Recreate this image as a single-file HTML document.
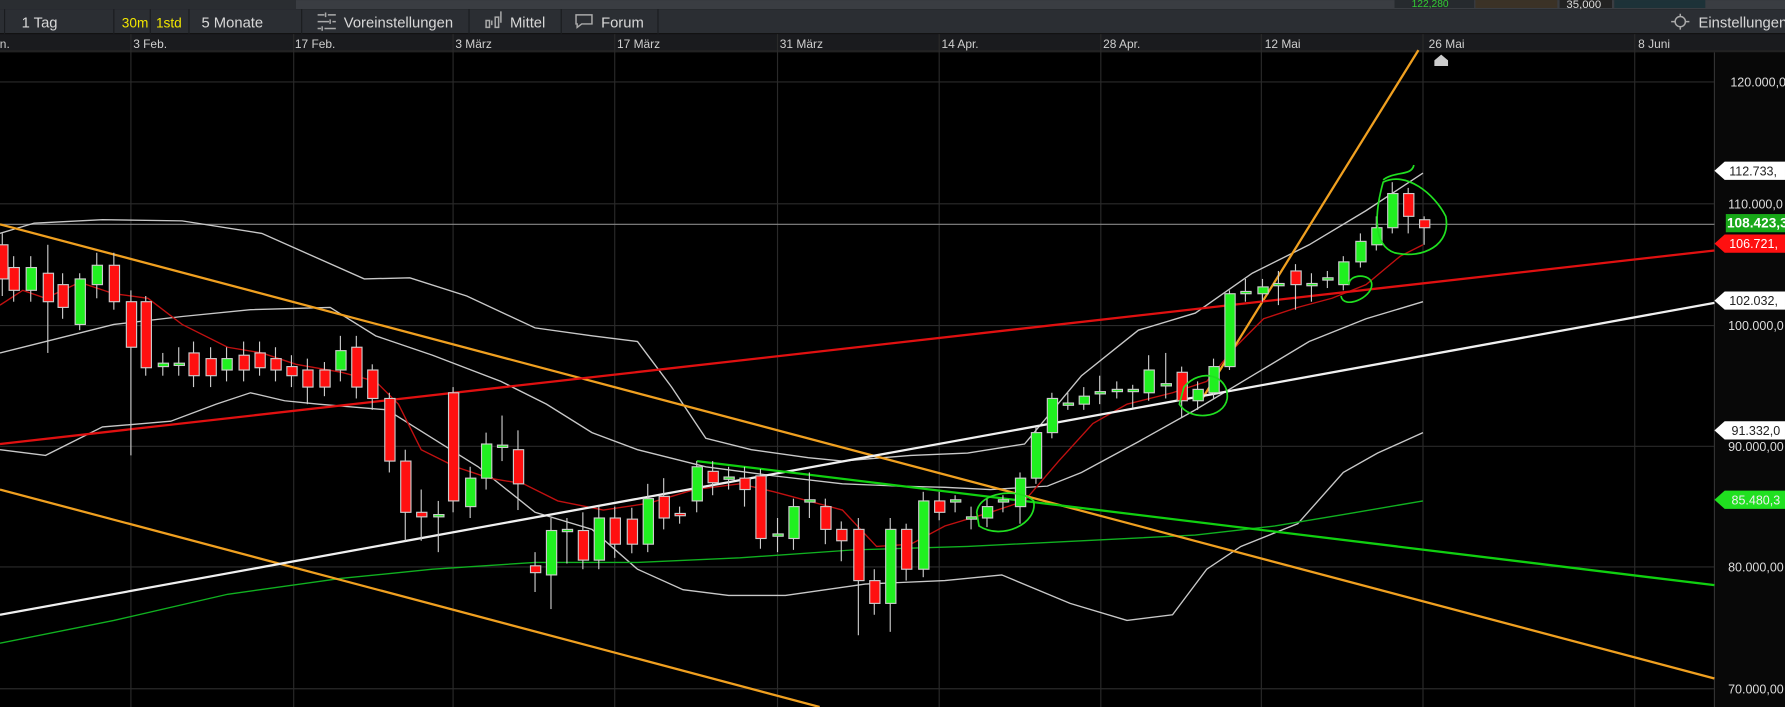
<!DOCTYPE html>
<html><head><meta charset="utf-8"><style>
html,body{margin:0;padding:0;background:#000;overflow:hidden}
svg{display:block}
text{font-family:"Liberation Sans",sans-serif}
</style></head><body>
<svg width="1785" height="707" viewBox="0 0 1568 621" xmlns="http://www.w3.org/2000/svg">
<rect width="1568" height="621" fill="#000"/>
<!-- top strip -->
<rect x="0" y="0" width="1568" height="8" fill="#3a3d42"/>
<rect x="0" y="0" width="260" height="8" fill="#2a2d31"/>
<rect x="1225" y="0" width="70" height="7" fill="#262a2e"/>
<text x="1240" y="6" font-size="9" fill="#3c3">122,280</text>
<rect x="1296" y="0" width="72" height="7" fill="#3b3226"/>
<rect x="1370" y="0" width="46" height="7" fill="#222"/>
<text x="1376" y="7" font-size="10" fill="#ddd">35,000</text>
<rect x="1418" y="0" width="80" height="7" fill="#1d3238"/>
<!-- toolbar -->
<rect x="0" y="8" width="1568" height="22" fill="#2b2e33"/>
<rect x="0" y="29" width="1568" height="1" fill="#111"/>
<g fill="#d8d8d8" font-size="13">
<text x="19" y="24">1 Tag</text>
<text x="107" y="24" fill="#f2e600" font-size="12">30m</text>
<text x="137" y="24" fill="#f2e600" font-size="12">1std</text>
<text x="177" y="24">5 Monate</text>
<text x="302" y="24">Voreinstellungen</text>
<text x="448" y="24">Mittel</text>
<text x="528" y="24">Forum</text>
<text x="1492" y="24">Einstellungen</text>
</g>
<g stroke="#1a1c1f" stroke-width="1">
<line x1="4" y1="8" x2="4" y2="30"/><line x1="100" y1="8" x2="100" y2="30"/><line x1="132" y1="8" x2="132" y2="30"/><line x1="166" y1="8" x2="166" y2="30"/><line x1="265" y1="8" x2="265" y2="30"/><line x1="412" y1="8" x2="412" y2="30"/><line x1="493" y1="8" x2="493" y2="30"/><line x1="578" y1="8" x2="578" y2="30"/>
</g>
<g stroke="#aaa" stroke-width="1.3" fill="none">
<path d="M279 13h6M288 13h7M279 19h10M292 19h3M279 25h3M285 25h10M286 11v4M290 17v4M283 23v4"/>
<path d="M427 24v-6h3v6zM432 22v-4M435 24v-9h3v9zM440 20v-10"/>
<path d="M506 13h14v8h-9l-4 3v-3h-1z"/>
<circle cx="1476" cy="19" r="4.5"/><path d="M1468 19h3M1481 19h3M1476 12v2M1476 24v2"/>
</g>
<!-- date axis -->
<rect x="0" y="30" width="1568" height="15" fill="#1a1b1e"/>
<rect x="0" y="44" width="1568" height="2" fill="#222"/>
<g fill="#cfcfcf" font-size="10.5">
<text x="-6" y="42">an.</text><text x="117" y="42">3 Feb.</text><text x="259" y="42">17 Feb.</text><text x="400" y="42">3 März</text><text x="542" y="42">17 März</text><text x="685" y="42">31 März</text><text x="827" y="42">14 Apr.</text><text x="969" y="42">28 Apr.</text><text x="1111" y="42">12 Mai</text><text x="1255" y="42">26 Mai</text><text x="1439" y="42">8 Juni</text>
</g>
<!-- price axis -->
<rect x="1506" y="46" width="62" height="575" fill="#080808"/>
<!-- grid -->
<g stroke="#2a2a2a" stroke-width="1">
<line x1="115" y1="30" x2="115" y2="621"/><line x1="258" y1="30" x2="258" y2="621"/><line x1="398" y1="30" x2="398" y2="621"/><line x1="540" y1="30" x2="540" y2="621"/><line x1="683" y1="30" x2="683" y2="621"/><line x1="825" y1="30" x2="825" y2="621"/><line x1="967" y1="30" x2="967" y2="621"/><line x1="1108" y1="30" x2="1108" y2="621"/><line x1="1250" y1="30" x2="1250" y2="621"/><line x1="1436" y1="30" x2="1436" y2="621"/>
<line x1="0" y1="72" x2="1506" y2="72"/><line x1="0" y1="179" x2="1506" y2="179"/><line x1="0" y1="286" x2="1506" y2="286"/><line x1="0" y1="392" x2="1506" y2="392"/><line x1="0" y1="498" x2="1506" y2="498"/><line x1="0" y1="605" x2="1506" y2="605"/>
<line x1="1506" y1="46" x2="1506" y2="621" stroke="#333"/>
</g>
<line x1="0" y1="197" x2="1506" y2="197" stroke="#888" stroke-width="1"/>
<!-- bollinger -->
<g fill="none" stroke="#c8c8c8" stroke-width="1.2">
<path d="M0 205 L30 196 L90 193 L160 194 L230 205 L320 245 L360 244 L410 260 L470 288 L520 295 L560 300 L590 340 L620 385 L660 395 L710 402 L740 405 L800 400 L850 398 L900 390 L950 330 L1000 290 L1050 275 L1100 240 L1150 215 L1200 185 L1250 152"/>
<path d="M0 310 L40 300 L100 285 L160 278 L220 272 L290 270 L330 295 L380 312 L440 335 L480 355 L520 380 L560 395 L620 410 L680 418 L740 425 L790 427 L830 428 L870 430 L920 427 L950 415 L1000 388 L1050 360 L1100 330 L1150 300 L1200 280 L1250 265"/>
<path d="M0 395 L40 400 L60 390 L90 375 L150 370 L190 355 L220 345 L250 352 L280 355 L340 360 L380 385 L420 410 L470 450 L520 465 L560 500 L600 518 L640 523 L690 523 L760 513 L830 510 L880 505 L940 530 L990 545 L1030 540 L1060 500 L1090 480 L1140 460 L1180 415 L1210 398 L1250 380"/>
</g>
<!-- green MA -->
<path d="M0 565 L100 545 L200 522 L300 508 L380 500 L470 494 L560 494 L650 490 L750 483 L850 480 L950 475 L1050 470 L1120 462 L1180 452 L1250 440" fill="none" stroke="#10b020" stroke-width="1.2"/>
<!-- red MA -->
<path d="M0 268 L20 255 L40 262 L70 248 L100 258 L130 262 L160 285 L200 305 L230 310 L260 320 L300 327 L330 335 L350 355 L370 395 L400 410 L430 420 L460 425 L490 440 L530 448 L570 442 L610 430 L650 425 L680 432 L710 440 L740 448 L770 480 L800 478 L830 462 L870 450 L900 440 L930 405 L960 372 L990 355 L1030 345 L1060 335 L1085 305 L1110 280 L1140 270 L1170 262 L1200 250 L1230 225 L1250 215" fill="none" stroke="#c01010" stroke-width="1.2"/>
<!-- trend lines -->
<g fill="none" stroke-width="2">
<line x1="0" y1="197" x2="1506" y2="596" stroke="#f0a020"/>
<line x1="0" y1="430" x2="720" y2="621" stroke="#f0a020"/>
<line x1="1055" y1="352" x2="1246" y2="44" stroke="#f0a020"/>
<line x1="0" y1="390" x2="1506" y2="220" stroke="#e01010"/>
<line x1="0" y1="540" x2="1506" y2="266" stroke="#f0f0f0"/>
<line x1="612" y1="405" x2="1506" y2="514" stroke="#10d010"/>
</g>
<!-- candles -->
<g stroke="#ccc" stroke-width="1" id="c">
<g fill="#ff1010">
<path d="M2 205v55"/><rect x="-2" y="215" width="9" height="30"/>
<path d="M12 225v40"/><rect x="8" y="235" width="9" height="20"/>
<path d="M42 215v95"/><rect x="38" y="240" width="9" height="25"/>
<path d="M55 240v40"/><rect x="51" y="250" width="9" height="20"/>
<path d="M100 222v50"/><rect x="96" y="233" width="9" height="32"/>
<path d="M115 255v145"/><rect x="111" y="265" width="9" height="40"/>
<path d="M128 260v70"/><rect x="124" y="265" width="9" height="58"/>
<path d="M170 300v40"/><rect x="166" y="310" width="9" height="20"/>
<path d="M185 305v35"/><rect x="181" y="315" width="9" height="15"/>
<path d="M214 300v35"/><rect x="210" y="312" width="9" height="13"/>
<path d="M228 300v30"/><rect x="224" y="310" width="9" height="13"/>
<path d="M242 305v30"/><rect x="238" y="315" width="9" height="10"/>
<path d="M256 312v28"/><rect x="252" y="322" width="9" height="8"/>
<path d="M270 315v40"/><rect x="266" y="325" width="9" height="15"/>
<path d="M285 318v30"/><rect x="281" y="325" width="9" height="15"/>
<path d="M313 295v55"/><rect x="309" y="305" width="9" height="35"/>
<path d="M327 320v40"/><rect x="323" y="325" width="9" height="25"/>
<path d="M342 345v70"/><rect x="338" y="350" width="9" height="55"/>
<path d="M356 395v80"/><rect x="352" y="405" width="9" height="45"/>
<path d="M370 430v45"/><rect x="366" y="450" width="9" height="4"/>
<path d="M398 340v110"/><rect x="394" y="345" width="9" height="95"/>
<path d="M455 378v70"/><rect x="451" y="395" width="9" height="30"/>
<path d="M470 485v35"/><rect x="466" y="497" width="9" height="6"/>
<path d="M512 450v50"/><rect x="508" y="466" width="9" height="26"/>
<path d="M540 445v45"/><rect x="536" y="455" width="9" height="23"/>
<path d="M555 446v40"/><rect x="551" y="456" width="9" height="22"/>
<path d="M583 420v45"/><rect x="579" y="436" width="9" height="19"/>
<path d="M597 445v15"/><rect x="593" y="451" width="9" height="2"/>
<path d="M626 405v30"/><rect x="622" y="414" width="9" height="10"/>
<path d="M654 410v35"/><rect x="650" y="420" width="9" height="10"/>
<path d="M668 412v70"/><rect x="664" y="418" width="9" height="55"/>
<path d="M725 438v40"/><rect x="721" y="445" width="9" height="20"/>
<path d="M739 458v35"/><rect x="735" y="465" width="9" height="10"/>
<path d="M754 455v103"/><rect x="750" y="465" width="9" height="45"/>
<path d="M768 500v40"/><rect x="764" y="510" width="9" height="20"/>
<path d="M796 460v50"/><rect x="792" y="465" width="9" height="35"/>
<path d="M825 432v25"/><rect x="821" y="440" width="9" height="10"/>
<path d="M1038 322v45"/><rect x="1034" y="327" width="9" height="25"/>
<path d="M1138 232v40"/><rect x="1134" y="238" width="9" height="12"/>
<path d="M1237 165v40"/><rect x="1233" y="170" width="9" height="20"/>
<path d="M1251 190v25"/><rect x="1247" y="193" width="9" height="7"/>
</g>
<g fill="#20f020">
<path d="M27 225v40"/><rect x="23" y="235" width="9" height="20"/>
<path d="M70 240v50"/><rect x="66" y="245" width="9" height="40"/>
<path d="M85 222v40"/><rect x="81" y="233" width="9" height="17"/>
<path d="M143 310v20"/><rect x="139" y="319" width="9" height="3"/>
<path d="M157 305v25"/><rect x="153" y="319" width="9" height="2"/>
<path d="M199 305v30"/><rect x="195" y="315" width="9" height="10"/>
<path d="M299 295v40"/><rect x="295" y="308" width="9" height="17"/>
<path d="M385 440v45"/><rect x="381" y="452" width="9" height="2"/>
<path d="M413 410v45"/><rect x="409" y="420" width="9" height="25"/>
<path d="M427 380v50"/><rect x="423" y="390" width="9" height="30"/>
<path d="M441 365v40"/><rect x="437" y="391" width="9" height="2"/>
<path d="M484 455v80"/><rect x="480" y="466" width="9" height="39"/>
<path d="M498 455v40"/><rect x="494" y="465" width="9" height="2"/>
<path d="M526 445v55"/><rect x="522" y="455" width="9" height="37"/>
<path d="M569 425v60"/><rect x="565" y="438" width="9" height="40"/>
<path d="M612 405v45"/><rect x="608" y="410" width="9" height="30"/>
<path d="M640 410v20"/><rect x="636" y="419" width="9" height="2"/>
<path d="M683 455v30"/><rect x="679" y="469" width="9" height="2"/>
<path d="M697 438v45"/><rect x="693" y="445" width="9" height="28"/>
<path d="M711 415v40"/><rect x="707" y="439" width="9" height="2"/>
<path d="M782 455v100"/><rect x="778" y="465" width="9" height="65"/>
<path d="M811 432v75"/><rect x="807" y="440" width="9" height="60"/>
<path d="M839 435v15"/><rect x="835" y="439" width="9" height="2"/>
<path d="M853 445v20"/><rect x="849" y="454" width="9" height="2"/>
<path d="M867 438v25"/><rect x="863" y="445" width="9" height="10"/>
<path d="M881 435v15"/><rect x="877" y="439" width="9" height="2"/>
<path d="M896 415v45"/><rect x="892" y="420" width="9" height="25"/>
<path d="M910 375v50"/><rect x="906" y="380" width="9" height="40"/>
<path d="M924 345v40"/><rect x="920" y="350" width="9" height="30"/>
<path d="M938 345v15"/><rect x="934" y="354" width="9" height="2"/>
<path d="M952 340v20"/><rect x="948" y="348" width="9" height="7"/>
<path d="M966 330v25"/><rect x="962" y="344" width="9" height="2"/>
<path d="M981 335v15"/><rect x="977" y="342" width="9" height="2"/>
<path d="M995 338v20"/><rect x="991" y="342" width="9" height="2"/>
<path d="M1009 312v40"/><rect x="1005" y="325" width="9" height="20"/>
<path d="M1024 310v40"/><rect x="1020" y="337" width="9" height="2"/>
<path d="M1052 335v25"/><rect x="1048" y="342" width="9" height="10"/>
<path d="M1066 315v35"/><rect x="1062" y="322" width="9" height="23"/>
<path d="M1080 255v70"/><rect x="1076" y="258" width="9" height="64"/>
<path d="M1094 245v20"/><rect x="1090" y="256" width="9" height="2"/>
<path d="M1109 245v20"/><rect x="1105" y="252" width="9" height="6"/>
<path d="M1123 238v30"/><rect x="1119" y="249" width="9" height="2"/>
<path d="M1152 240v25"/><rect x="1148" y="249" width="9" height="2"/>
<path d="M1166 238v15"/><rect x="1162" y="244" width="9" height="2"/>
<path d="M1180 225v30"/><rect x="1176" y="230" width="9" height="20"/>
<path d="M1195 205v30"/><rect x="1191" y="212" width="9" height="18"/>
<path d="M1209 190v30"/><rect x="1205" y="200" width="9" height="15"/>
<path d="M1223 160v45"/><rect x="1219" y="170" width="9" height="30"/>
</g>
</g>
<!-- hand-drawn circles -->
<g fill="none" stroke="#20e020" stroke-width="1.5">
<path d="M1215 160 C1235 150,1260 170,1270 190 C1275 215,1250 228,1225 222 C1205 215,1208 185,1215 160 Z M1215 158 C1225 150,1240 155,1242 145"/>
<path d="M1040 340 C1055 322,1080 330,1078 350 C1075 368,1045 370,1036 355 Z"/>
<path d="M858 450 C860 432,895 428,908 440 C912 460,880 475,860 462 Z"/>
<path d="M1185 250 C1185 240,1205 240,1205 250 C1205 262,1180 272,1178 260"/>
</g>
<!-- marker -->
<path d="M1260 58v-5l6-5 6 5v5z" fill="#ccc"/>
<!-- price labels -->
<g font-size="11" fill="#ddd">
<text x="1520" y="76">120.000,0</text>
<text x="1518" y="183">110.000,0</text>
<text x="1518" y="290">100.000,0</text>
<text x="1518" y="396">90.000,00</text>
<text x="1518" y="502">80.000,00</text>
<text x="1518" y="609">70.000,00</text>
</g>
<g font-size="11">
<path d="M1506 150l9-8h53v16h-53z" fill="#fff"/><text x="1519" y="154" fill="#222">112.733,</text>
<rect x="1516" y="188" width="52" height="16" fill="#18a818"/><text x="1517" y="200" fill="#fff" font-weight="bold" font-size="12">108.423,3</text>
<path d="M1506 214l9-8h53v16h-53z" fill="#ff1010"/><text x="1519" y="218" fill="#fff">106.721,</text>
<path d="M1506 264l9-8h53v16h-53z" fill="#fff"/><text x="1519" y="268" fill="#222">102.032,</text>
<path d="M1506 378l9-8h53v16h-53z" fill="#fff"/><text x="1521" y="382" fill="#222">91.332,0</text>
<path d="M1506 439l9-8h53v16h-53z" fill="#20e020"/><text x="1521" y="443" fill="#eee">85.480,3</text>
</g>
</svg>
</body></html>
